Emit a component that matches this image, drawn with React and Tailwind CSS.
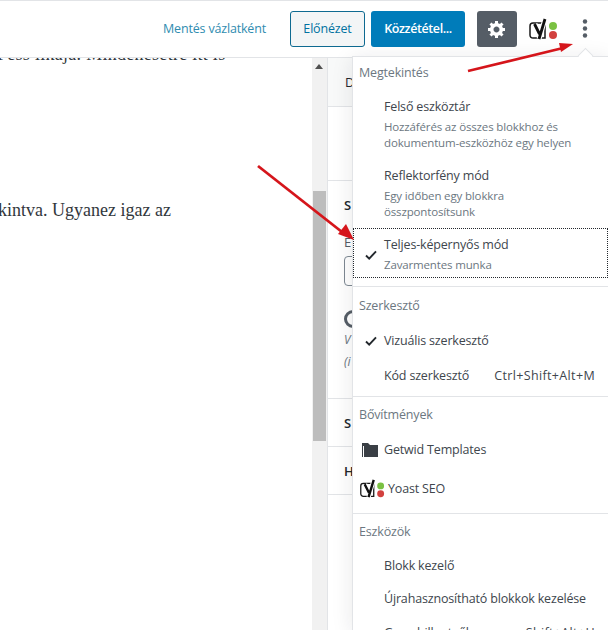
const sans = "font-['Open_Sans','Noto_Sans',sans-serif]";

function Check() {
  return (
    <svg className="absolute left-[11px] top-1/2 -translate-y-1/2" width="14" height="12" viewBox="0 0 14 12">
      <path d="M2 6.5 L5.2 9.6 L12 2.4" fill="none" stroke="#23282d" strokeWidth="1.9" />
    </svg>
  );
}

function YoastIcon({ small }) {
  return (
    <svg width={small ? 26 : 30} height={small ? 19 : 22} viewBox="0 0 30 22" className="block">
      <path d="M5 5 H17 V20 H5 C3.2 20 2 18.8 2 17 V8 C2 6.2 3.2 5 5 5 Z" fill="none" stroke="#1a1a1a" strokeWidth="1.5" />
      <path d="M7 6 L11.5 15 M17 1 L11 21" fill="none" stroke="#fff" strokeWidth="5" />
      <path d="M6.5 6 L11.5 16 M17 1 L11 21" fill="none" stroke="#111" strokeWidth="2.8" />
      <circle cx="25" cy="8" r="4" fill="#7ac142" />
      <circle cx="25" cy="17" r="4" fill="#d2413f" />
    </svg>
  );
}

function Section({ title, children, last, className = "" }) {
  return (
    <div className={`${last ? "" : "border-b border-[#e2e4e7]"} ${className}`}>
      <div className="pl-[6px] text-[#6c7781]">{title}</div>
      {children}
    </div>
  );
}

function Item({ title, sub, checked, shortcut, className = "" }) {
  return (
    <div className={`relative pl-[31px] ${className}`}>
      {checked && <Check />}
      <div className="flex justify-between pr-[13px] text-[#40464d]">
        <span>{title}</span>
        {shortcut && <span className="tracking-[0.35px]">{shortcut}</span>}
      </div>
      {sub && <div className="mt-[3px] text-[11.5px] leading-[16px] tracking-[-0.15px] text-[#6c7781]">{sub}</div>}
    </div>
  );
}

export default function App() {
  return (
    <div className={`relative h-[630px] w-[608px] overflow-hidden bg-white ${sans}`}>
      <header className="relative z-10 flex h-[58px] items-center justify-end border-t border-b border-t-[#e2e4e7] border-b-[#e2e4e7] bg-white pr-[20px]">
        <span className="mr-[24px] text-[12.5px] tracking-[-0.17px] text-[#2f8cb0]">Mentés vázlatként</span>
        <button className="mr-[6px] h-[36px] w-[75px] rounded-[3px] border border-[#0e6a91] bg-[#f3f5f6] text-[12.5px] tracking-[-0.17px] text-[#0071a1]">Előnézet</button>
        <button className="mr-[12px] h-[36px] w-[94px] rounded-[3px] bg-[#007cba] text-[12.5px] font-semibold tracking-[-0.4px] text-white">Közzététel...</button>
        <button className="mr-[11px] flex h-[36px] w-[40px] items-center justify-center rounded-[3px] bg-[#555d66]">
          <svg width="20" height="20" viewBox="0 0 20 20">
            <path fill="#fff" d="M18 12h-2.18c-.17.7-.44 1.35-.81 1.93l1.54 1.54-2.1 2.1-1.54-1.54c-.58.36-1.23.63-1.91.79V19H8v-2.18c-.68-.16-1.33-.43-1.91-.79l-1.54 1.54-2.12-2.12 1.54-1.54c-.36-.58-.63-1.23-.79-1.91H1V9.03h2.17c.16-.7.44-1.35.8-1.94L2.43 5.55l2.1-2.1 1.54 1.54c.58-.37 1.24-.64 1.93-.81V2h3v2.18c.68.16 1.33.43 1.91.79l1.54-1.54 2.12 2.12-1.54 1.54c.36.59.64 1.24.8 1.94H18V12zm-8.5 1.5c1.66 0 3-1.34 3-3s-1.34-3-3-3-3 1.34-3 3 1.34 3 3 3z" />
          </svg>
        </button>
        <div className="mr-[24px]"><YoastIcon /></div>
        <svg width="6" height="24" viewBox="0 0 6 24">
          <circle cx="3" cy="4.5" r="2.2" fill="#555d66" />
          <circle cx="3" cy="11.5" r="2.2" fill="#555d66" />
          <circle cx="3" cy="18.5" r="2.2" fill="#555d66" />
        </svg>
      </header>

      <main className="flex h-[572px]">
        <div className="w-[312px] overflow-hidden font-['Liberation_Serif',serif] text-[18px] leading-[26px] text-[#32373c]">
          <p className="-mt-[17px] ml-[-3px] whitespace-nowrap tracking-[0.28px]">Fess ilkaja. Mindenesetre itt is</p>
          <p className="-ml-[2px] mt-[130px] whitespace-nowrap">kintva. Ugyanez igaz az</p>
        </div>
        <div className="w-[15px] bg-[#f1f1f1]">
          <div className="relative pt-[133px] pl-[1px]">
            <div className="absolute left-[3px] top-[6px] h-0 w-0 border-x-[4px] border-b-[5px] border-x-transparent border-b-[#505050]" />
            <div className="h-[250px] w-[13px] bg-[#bdbdbd]" />
          </div>
        </div>
        <aside className="flex-1 border-l border-[#e2e4e7] text-[13px] text-[#23282d]">
          <div className="h-[49px] border-b border-[#e2e4e7] bg-[#f8f9f9] pl-[17px] pt-[15px]">D</div>
          <div className="h-[74px] border-b border-[#e2e4e7]" />
          <div className="h-[218px] border-b border-[#e2e4e7] pl-[16px] pt-[15px] leading-[18px]">
            <div className="font-semibold">S</div>
            <div className="mt-[19px] text-[#555d66]">E</div>
            <div className="mt-[5px] h-[30px] rounded-[4px] border border-[#7e8993]" />
            <div className="mt-[24px] h-[18px] w-[18px] rounded-full border-[3px] border-[#555d66]" />
            <div className="mt-[3px] text-[12px] italic text-[#6c7781]">V</div>
            <div className="mt-[4px] text-[12px] italic text-[#6c7781]">(i</div>
          </div>
          <div className="h-[48px] border-b border-[#e2e4e7] pl-[16px] pt-[15px] font-semibold">S</div>
          <div className="h-[48px] border-b border-[#e2e4e7] pl-[16px] pt-[15px] font-semibold">H</div>
        </aside>
      </main>

      <div className="absolute bottom-0 left-[352px] top-[56px] z-20 w-[256px] border-t border-l border-[#e2e4e7] bg-white text-[12.5px] leading-[18px] tracking-[-0.17px] shadow-[0_3px_20px_rgba(25,30,35,0.1)]">
        <div className="absolute left-[227px] -top-[7px] h-[11px] w-[11px] rotate-45 border-t border-l border-[#e2e4e7] bg-white" />
        <div className="relative h-[573px] overflow-hidden pt-[7px]">
          <Section title="Megtekintés" className="h-[223px]">
            <Item className="mt-[16px]" title="Felső eszköztár" sub={<>Hozzáférés az összes blokkhoz és<br />dokumentum-eszközhöz egy helyen</>} />
            <Item className="mt-[16px]" title="Reflektorfény mód" sub={<>Egy időben egy blokkra<br />összpontosítsunk</>} />
            <div className="mt-[8px] border border-dotted border-[#23282d] pt-[7px] pb-[4px]">
              <Item className="-ml-[1px]" checked title="Teljes-képernyős mód" sub="Zavarmentes munka" />
            </div>
          </Section>
          <Section title="Szerkesztő" className="h-[110px] pt-[10px]">
            <Item className="mt-[17px]" checked title="Vizuális szerkesztő" />
            <Item className="mt-[17px]" title="Kód szerkesztő" shortcut="Ctrl+Shift+Alt+M" />
          </Section>
          <Section title="Bővítmények" className="h-[117px] pt-[9px]">
            <div className="mt-[17px] flex items-center">
              <svg className="ml-[9px] mr-[6px]" width="16" height="14" viewBox="0 0 16 14">
                <path d="M0 0 H6 L8 2 H16 V14 H2 V3 H0 Z M0 3 V14 H1 V3 Z" fill="#3a3f45" />
              </svg>
              <span className="text-[#40464d]">Getwid Templates</span>
            </div>
            <div className="mt-[20px] flex items-center">
              <div className="ml-[6px] mr-[3px]"><YoastIcon small /></div>
              <span className="text-[#40464d]">Yoast SEO</span>
            </div>
          </Section>
          <Section last title="Eszközök" className="pt-[9px]">
            <Item className="mt-[16px]" title="Blokk kezelő" />
            <Item className="mt-[15px]" title="Újrahasznosítható blokkok kezelése" />
            <Item className="mt-[16px]" title="Gyorsbillentyűk" shortcut="Shift+Alt+H" />
          </Section>
        </div>
      </div>

      <svg className="absolute left-0 top-0 z-30" width="608" height="630" viewBox="0 0 608 630">
        <path d="M468 71 L561 48.5" stroke="#d5151b" strokeWidth="2.6" fill="none" />
        <polygon points="573,44 559,43 561,52" fill="#d5151b" />
        <path d="M258 166 L342 232" stroke="#d5151b" strokeWidth="2.8" fill="none" />
        <polygon points="354,240 338,234 346,224" fill="#d5151b" />
      </svg>
    </div>
  );
}
